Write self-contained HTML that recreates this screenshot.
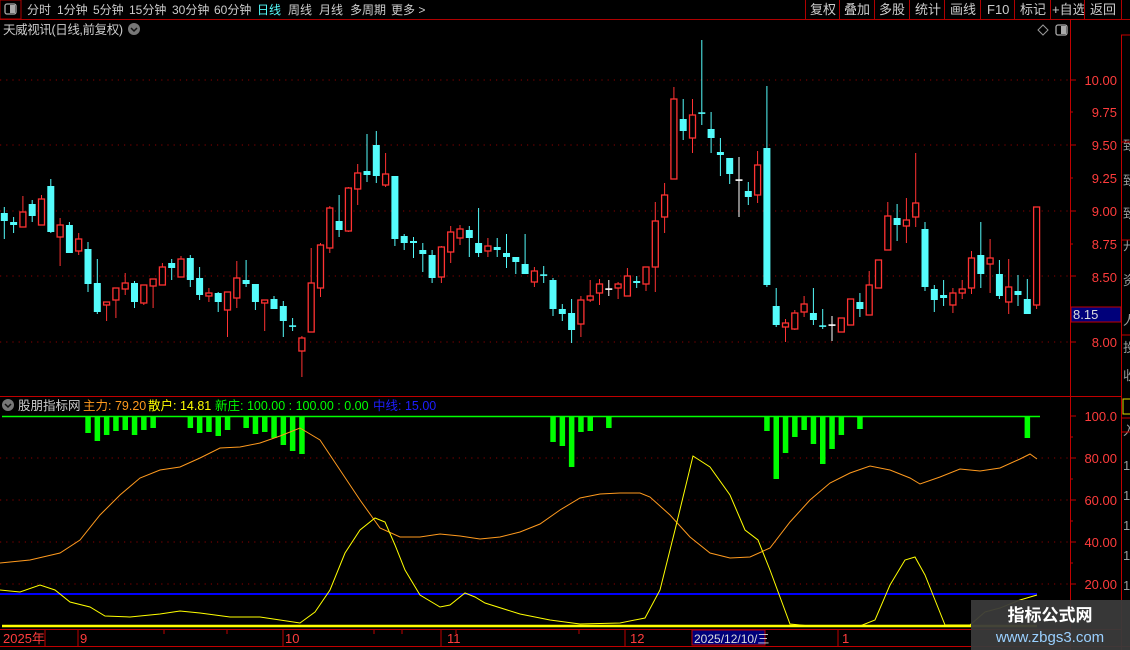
<!DOCTYPE html>
<html><head><meta charset="utf-8">
<style>
html,body{margin:0;padding:0;background:#000;width:1130px;height:650px;overflow:hidden}
body{font-family:"Liberation Sans","Noto Sans CJK SC",sans-serif}
svg{position:absolute;left:0;top:0}
text{font-family:"Liberation Sans","Noto Sans CJK SC",sans-serif}
</style></head><body>
<svg width="1130" height="650" viewBox="0 0 1130 650" xmlns="http://www.w3.org/2000/svg" id="s">
<rect width="1130" height="650" fill="#000"/>
<rect x="0" y="0" width="21" height="19" fill="none" stroke="#b00000"/>
<rect x="5" y="4" width="11" height="10" rx="2" fill="none" stroke="#aaa" stroke-width="1.3"/>
<rect x="10" y="5" width="5" height="8" fill="#aaa"/>
<line x1="0" y1="19.5" x2="1130" y2="19.5" stroke="#b00000"/>
<g font-size="12" fill="#ccc">
<text x="27" y="14">分时</text><text x="57" y="14">1分钟</text><text x="93" y="14">5分钟</text><text x="129" y="14">15分钟</text><text x="172" y="14">30分钟</text><text x="214" y="14">60分钟</text>
<text x="257" y="14" fill="#54fcfc">日线</text><text x="288" y="14">周线</text><text x="319" y="14">月线</text><text x="350" y="14">多周期</text><text x="391" y="14">更多 &gt;</text>
</g>
<g font-size="13" fill="#ccc">
<text x="810" y="14">复权</text><text x="844" y="14">叠加</text><text x="879" y="14">多股</text><text x="915" y="14">统计</text><text x="950" y="14">画线</text><text x="987" y="14">F10</text><text x="1020" y="14">标记</text><text x="1052" y="14">+自选</text><text x="1090" y="14">返回</text>
</g>
<g stroke="#b00000"><line x1="805.5" y1="0" x2="805.5" y2="19"/><line x1="839.5" y1="0" x2="839.5" y2="19"/><line x1="874.5" y1="0" x2="874.5" y2="19"/><line x1="909.5" y1="0" x2="909.5" y2="19"/><line x1="944.5" y1="0" x2="944.5" y2="19"/><line x1="980.5" y1="0" x2="980.5" y2="19"/><line x1="1014.5" y1="0" x2="1014.5" y2="19"/><line x1="1050.5" y1="0" x2="1050.5" y2="19"/><line x1="1084.5" y1="0" x2="1084.5" y2="19"/><line x1="1121.5" y1="0" x2="1121.5" y2="19"/></g>
<text x="3" y="34" font-size="12.5" fill="#ccc" textLength="120">天威视讯(日线,前复权)</text>
<circle cx="134" cy="29" r="6" fill="#777"/><path d="M131 28 L134 31 L137 28" stroke="#111" stroke-width="1.5" fill="none"/>
<path d="M1043 25 L1048 30 L1043 35 L1038 30 Z" fill="none" stroke="#999"/>
<rect x="1056" y="25" width="11" height="10" rx="2" fill="none" stroke="#aaa" stroke-width="1.3"/><rect x="1061" y="26" width="5" height="8" fill="#aaa"/>
<line x1="1070.5" y1="19" x2="1070.5" y2="650" stroke="#c00000"/>
<line x1="1121.5" y1="35" x2="1121.5" y2="650" stroke="#c00000"/>
<line x1="0" y1="396.5" x2="1121" y2="396.5" stroke="#c00000"/>
<line x1="0" y1="629.5" x2="1121" y2="629.5" stroke="#c00000"/>
<line x1="0" y1="646.5" x2="1130" y2="646.5" stroke="#c00000"/>
<g stroke="#8a0000" stroke-dasharray="1.2 5">
<line x1="0" y1="80" x2="1068" y2="80"/><line x1="0" y1="145" x2="1068" y2="145"/><line x1="0" y1="211" x2="1068" y2="211"/><line x1="0" y1="276" x2="1068" y2="276"/><line x1="0" y1="342" x2="1068" y2="342"/>
<line x1="0" y1="458" x2="1068" y2="458"/><line x1="0" y1="500" x2="1068" y2="500"/><line x1="0" y1="542" x2="1068" y2="542"/><line x1="0" y1="584" x2="1068" y2="584"/>
</g>
<g stroke="#c00000"><line x1="1070" y1="80" x2="1076" y2="80"/><line x1="1070" y1="112" x2="1073" y2="112"/><line x1="1070" y1="145" x2="1076" y2="145"/><line x1="1070" y1="178" x2="1073" y2="178"/><line x1="1070" y1="211" x2="1076" y2="211"/><line x1="1070" y1="244" x2="1073" y2="244"/><line x1="1070" y1="276" x2="1076" y2="276"/><line x1="1070" y1="342" x2="1076" y2="342"/>
<line x1="1070" y1="416" x2="1076" y2="416"/><line x1="1070" y1="437" x2="1073" y2="437"/><line x1="1070" y1="458" x2="1076" y2="458"/><line x1="1070" y1="479" x2="1073" y2="479"/><line x1="1070" y1="500" x2="1076" y2="500"/><line x1="1070" y1="521" x2="1073" y2="521"/><line x1="1070" y1="542" x2="1076" y2="542"/><line x1="1070" y1="563" x2="1073" y2="563"/><line x1="1070" y1="584" x2="1076" y2="584"/></g>
<g font-size="13" fill="#ff3c3c" text-anchor="end">
<text x="1117" y="85">10.00</text><text x="1117" y="117">9.75</text><text x="1117" y="150">9.50</text>
<text x="1117" y="183">9.25</text><text x="1117" y="216">9.00</text>
<text x="1117" y="249">8.75</text><text x="1117" y="282">8.50</text><text x="1117" y="347">8.00</text>
<text x="1117" y="421">100.0</text><text x="1117" y="463">80.00</text><text x="1117" y="505">60.00</text><text x="1117" y="547">40.00</text><text x="1117" y="589">20.00</text>
</g>
<rect x="1071" y="307" width="50" height="15" fill="#00007a" stroke="#c00000"/>
<text x="1073" y="319" font-size="13" fill="#ddd">8.15</text>
<g fill="#999" font-size="13"><text x="1123" y="150">致</text><text x="1123" y="185">致</text><text x="1123" y="218">致</text><text x="1123" y="250">开</text><text x="1123" y="285">资</text><text x="1123" y="325">人</text><text x="1123" y="352">投</text><text x="1123" y="380">收</text><text x="1123" y="435">入</text><text x="1123" y="470">1</text><text x="1123" y="500">1</text><text x="1123" y="530">1</text><text x="1123" y="560">1</text><text x="1123" y="590">1</text></g>
<rect x="1123" y="399" width="8" height="15" fill="none" stroke="#dd0"/>
<g stroke="#c00000"><line x1="1121" y1="35" x2="1130" y2="35"/><line x1="1121" y1="142" x2="1130" y2="142"/><line x1="1121" y1="240" x2="1130" y2="240"/><line x1="1121" y1="335" x2="1130" y2="335"/><line x1="1121" y1="418" x2="1130" y2="418"/><line x1="1121" y1="432" x2="1130" y2="432"/></g>
<g id="cd"></g>
<circle cx="8" cy="405" r="6" fill="#777"/><path d="M5 404 L8 407 L11 404" stroke="#111" stroke-width="1.5" fill="none"/>
<g font-size="12.5"><text x="18" y="410" fill="#ccc">股朋指标网</text><text x="83" y="410" fill="#ff9a1e">主力: 79.20</text><text x="148" y="410" fill="#ffff00">散户: 14.81</text><text x="215" y="410" fill="#00ff00">新庄: 100.00 : 100.00 : 0.00</text><text x="373" y="410" fill="#1e1eff">中线: 15.00</text></g>
<line x1="2" y1="416.5" x2="1040" y2="416.5" stroke="#00ff00" stroke-width="1.5"/>
<g id="bars" fill="#00ff00"></g>
<line x1="0" y1="594" x2="1037" y2="594" stroke="#0000ff" stroke-width="2"/>
<polyline fill="none" stroke="#ff9a1e" stroke-width="1" points="0,563 30,560 60,553 80,540 100,515 120,495 140,478 160,470 180,467 200,458 220,448 240,447 260,443 280,436 300,428 320,440 340,470 360,500 380,528 400,537 420,537 440,534 460,536 480,539 500,537 520,532 540,524 560,510 580,498 600,494 620,493 640,493 650,497 670,515 690,537 710,553 730,558 750,557 770,548 790,522 810,500 830,483 850,473 870,466 890,470 910,478 920,484 940,477 960,469 980,471 1000,468 1020,459 1030,454 1037,459"/>
<polyline fill="none" stroke="#ffff00" stroke-width="1" points="0,590 20,592 40,585 55,590 70,602 90,607 105,616 130,617 160,614 180,611 200,613 230,617 260,617 280,620 300,623 315,612 330,590 345,553 360,530 375,518 385,522 395,545 405,570 420,595 440,607 450,605 465,593 475,597 485,603 520,614 550,620 580,624 620,623 645,618 660,590 675,530 693,456 710,467 730,495 745,530 758,540 770,570 790,624 810,626 860,626 875,620 890,585 905,560 915,557 925,575 935,600 945,625 970,625 985,612 1000,608 1020,600 1037,595"/>
<line x1="2" y1="626" x2="1037" y2="626" stroke="#ffff00" stroke-width="2.5"/>
<g stroke="#c00000"><line x1="45" y1="630" x2="45" y2="646"/><line x1="164" y1="630" x2="164" y2="634"/><line x1="227" y1="630" x2="227" y2="634"/><line x1="374" y1="630" x2="374" y2="634"/><line x1="402" y1="630" x2="402" y2="634"/><line x1="441" y1="630" x2="441" y2="646"/><line x1="456" y1="630" x2="456" y2="634"/><line x1="579" y1="630" x2="579" y2="634"/><line x1="625" y1="630" x2="625" y2="646"/><line x1="704" y1="630" x2="704" y2="634"/><line x1="838" y1="630" x2="838" y2="646"/><line x1="78" y1="630" x2="78" y2="646"/><line x1="283" y1="630" x2="283" y2="646"/></g>
<g font-size="13" fill="#ff3c3c"><text x="3" y="643">2025年</text><text x="80" y="643">9</text><text x="285" y="643">10</text><text x="447" y="643">11</text><text x="630" y="643">12</text><text x="842" y="643">1</text></g>
<rect x="692" y="630" width="73" height="15" fill="#00007a" stroke="#c00000"/>
<text x="694" y="643" font-size="12" fill="#ddd">2025/12/10/三</text>
<rect x="971" y="600" width="159" height="50" fill="#3a3a3a" opacity="0.95"/>
<text x="1050" y="621" font-size="17" font-weight="bold" fill="#fff" text-anchor="middle">指标公式网</text>
<text x="1050" y="642" font-size="15" fill="#9ad0ff" text-anchor="middle">www.zbgs3.com</text>
</svg>
<script>
var D=[
[207,213,221,239,'c'],[217,222,225,233,'c'],[196,212,227,227,'r'],[200,204,216,222,'c'],[195,199,225,225,'r'],[179,186,232,233,'c'],[218,225,237,266,'r'],[222,225,253,253,'c'],[233,239,251,255,'r'],[242,249,284,292,'c'],
[259,283,312,314,'c'],[302,302,305,321,'r'],[288,288,300,318,'r'],[273,283,289,295,'r'],[281,283,302,308,'c'],[285,285,303,305,'r'],[279,279,286,308,'r'],[263,267,285,285,'r'],[259,263,268,280,'c'],[256,259,277,277,'r'],
[255,258,280,287,'c'],[267,278,295,300,'c'],[288,293,296,302,'r'],[292,293,302,312,'c'],[292,292,310,337,'r'],[261,278,298,308,'r'],[260,280,284,287,'c'],[284,284,302,310,'c'],[300,300,303,331,'r'],[296,299,309,309,'c'],
[301,306,321,337,'c'],[318,325,327,331,'x'],[336,338,351,377,'r'],[248,283,332,332,'r'],[243,245,288,297,'r'],[206,208,248,253,'r'],[195,221,230,237,'c'],[187,188,231,232,'r'],[164,173,189,205,'r'],[134,171,175,182,'c'],
[131,145,176,183,'c'],[153,174,185,187,'r'],[176,176,239,246,'c'],[234,236,243,250,'c'],[237,241,243,258,'c'],[243,250,254,272,'c'],[250,255,278,283,'c'],[246,247,277,283,'r'],[226,232,252,263,'r'],[225,229,238,245,'r'],
[226,230,238,257,'c'],[208,243,253,257,'c'],[238,246,251,257,'r'],[238,247,250,257,'c'],[234,253,257,268,'c'],[257,257,262,274,'c'],[234,264,274,274,'c'],[267,271,282,287,'r'],[266,274,276,283,'x'],[278,280,309,316,'c'],
[304,309,314,321,'c'],[299,313,330,343,'c'],[296,300,324,337,'r'],[280,296,300,302,'r'],[279,284,293,305,'r'],[280,288,290,296,'w'],[282,284,288,299,'r'],[268,276,296,296,'r'],[276,281,283,288,'c'],[267,267,284,291,'r'],
[202,221,267,292,'r'],[183,195,217,233,'r'],[87,99,179,179,'r'],[99,119,131,140,'c'],[99,115,138,153,'r'],[40,112,114,125,'x'],[112,129,138,153,'c'],[138,152,155,176,'c'],[158,158,174,184,'c'],[157,179,181,217,'w'],
[182,191,197,205,'c'],[151,165,195,203,'r'],[86,148,285,287,'c'],[288,306,325,327,'c'],[319,323,327,342,'r'],[310,313,329,330,'r'],[296,304,312,317,'r'],[288,313,320,325,'c'],[309,325,327,329,'x'],[316,324,326,341,'w'],
[318,318,332,332,'r'],[299,299,325,325,'r'],[293,302,309,317,'c'],[271,285,315,315,'r'],[260,260,288,288,'r'],[202,216,250,250,'r'],[204,218,225,241,'c'],[198,220,226,243,'r'],[153,203,217,227,'r'],[222,229,287,291,'c'],
[285,289,300,312,'c'],[280,295,298,306,'c'],[288,293,305,313,'r'],[280,289,293,299,'r'],[251,258,288,294,'r'],[222,255,274,288,'c'],[239,258,264,293,'r'],[260,274,296,299,'c'],[259,287,302,314,'r'],[275,291,295,306,'c'],
[279,299,314,314,'c'],[207,207,305,309,'r']];
var s='',C={c:'#54fcfc',r:'#ff3232',w:'#ffffff',x:'#54fcfc'};
D.forEach(function(d,i){var x=4.3+9.3*i,col=C[d[4]];
s+='<line x1="'+x+'" y1="'+d[0]+'" x2="'+x+'" y2="'+d[3]+'" stroke="'+col+'" stroke-width="1"/>';
var h=Math.max(d[2]-d[1],1);
if(d[4]=='r'){s+='<rect x="'+(x-3)+'" y="'+d[1]+'" width="6" height="'+Math.max(h,2)+'" fill="#000" stroke="'+col+'" stroke-width="1.3"/>';}
else if(d[4]=='x'||d[4]=='w'){s+='<rect x="'+(x-3.5)+'" y="'+((d[1]+d[2])/2-0.7)+'" width="7" height="1.6" fill="'+col+'"/>';}
else{s+='<rect x="'+(x-3.5)+'" y="'+d[1]+'" width="7" height="'+Math.max(h,2)+'" fill="'+col+'"/>';}
});
document.getElementById('cd').innerHTML=s;
var B=[[9,433],[10,441],[11,435],[12,431],[13,430],[14,435],[15,430],[16,428],[20,428],[21,433],[22,432],[23,436],[24,430],[26,428],[27,434],[28,432],[29,438],[30,445],[31,451],[32,454],
[59,442],[60,446],[61,467],[62,432],[63,431],[65,428],[82,431],[83,479],[84,453],[85,437],[86,430],[87,444],[88,464],[89,449],[90,435],[92,429],[110,438]];
var b='';B.forEach(function(d){var x=4.3+9.3*d[0];b+='<rect x="'+(x-2.7)+'" y="417" width="5.5" height="'+(d[1]-417)+'"/>';});
document.getElementById('bars').innerHTML=b;
</script>
</body></html>
